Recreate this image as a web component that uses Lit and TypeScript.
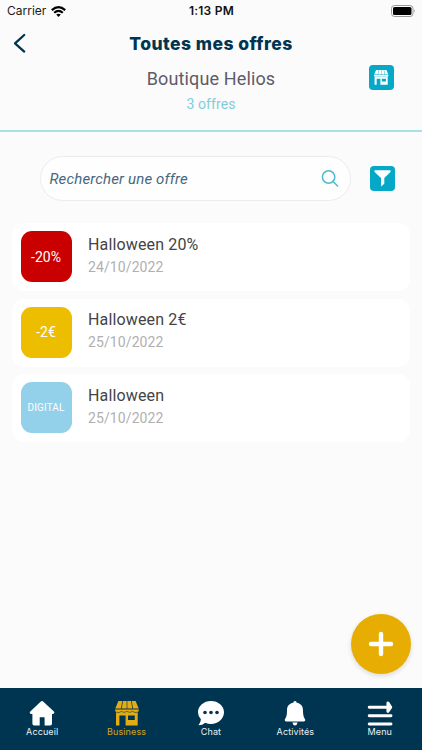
import { LitElement, html, css } from "lit";
import { customElement } from "lit/decorators.js";
import { classMap } from "lit/directives/class-map.js";

const shop = () => html`<svg class="icon" viewBox="0 0 24 24" fill="currentColor">
  <path d="M3.4 0H7.2L6.1 7.6H.3Z M7.9 0H11.7V7.6H6.8Z M12.3 0H16.1L17.2 7.6H12.3Z M16.8 0H20.6L23.7 7.6H17.9Z"/>
  <path d="M0 8.4H24Q23.8 10.6 22.7 11V24.4H10.6V14.4H4.4V24.4H1V11Q.2 10.6 0 8.4Z M13 14.6V19H19.8V14.6Z" fill-rule="evenodd"/>
  <path class="scallop" d="M1.2 11.2Q4.5 12.2 6.4 10.4Q9 12.4 12 10.4Q15 12.4 17.6 10.4Q20 12.2 22.7 11.2"/>
</svg>`;

const tabs = [
  { label: "Accueil", icon: html`<svg class="icon" viewBox="0 0 24 24" fill="currentColor"><path d="M10.6 .7Q12 -.6 13.4 .7L23.9 10.6Q25.2 12.5 23 13H22V22.5Q22 24.4 20.2 24.4H14.6V16.3H9.7V24.4H4.2Q2.4 24.4 2.4 22.5V13H1Q-1.1 12.5 .3 10.6Z"/></svg>` },
  { label: "Business", icon: shop(), active: true },
  { label: "Chat", icon: html`<svg class="icon wide" viewBox="0 0 26 24"><path fill="currentColor" d="M13 0C20.2 0 26 4.9 26 11.2S20.2 22.9 13 22.9Q10 22.9 7.2 21.7Q4.5 24.2 .5 24.2Q2.9 21 2.9 18.2Q0 15.3 0 11.2C0 4.9 5.8 0 13 0Z"/><g fill="#003552"><circle cx="7" cy="11.5" r="1.8"/><circle cx="13" cy="11.5" r="1.8"/><circle cx="19" cy="11.5" r="1.8"/></g></svg>` },
  { label: "Activités", icon: html`<svg class="icon" viewBox="0 0 24 24" fill="currentColor"><path d="M10.3 1.8Q10.3 0 12 0T13.7 1.8C18 2.4 20 5.5 20 9.2C20 15 21 16.5 22.2 18.4Q22.6 20.4 20.8 20.4H3.2Q1.4 20.4 1.8 18.4C3 16.5 4 15 4 9.2C4 5.5 6 2.4 10.3 1.8Z M9.4 21.5H14.6Q14 24.5 12 24.5T9.4 21.5Z"/></svg>` },
  { label: "Menu", icon: html`<svg class="icon" viewBox="0 0 24 24" fill="none" stroke="currentColor" stroke-width="2.9" stroke-linecap="round"><path d="M1.2 6.2H21M1.2 14.8H23M1.2 23H23"/><path fill="currentColor" stroke-linejoin="round" d="M19.9 1.9L22.8 6.2L19.9 10.4Z"/></svg>` },
];

const offers = [
  { badge: "-20%", tone: "red", title: "Halloween 20%", date: "24/10/2022" },
  { badge: "-2€", tone: "yellow", title: "Halloween 2€", date: "25/10/2022" },
  { badge: "DIGITAL", tone: "blue", title: "Halloween", date: "25/10/2022" },
];

@customElement("app-root")
export class AppRoot extends LitElement {
  static styles = css`
    :host { display: flex; flex-direction: column; position: relative; width: 422px; height: 750px; overflow: hidden;
      background: #fbfbfb; font-family: Roboto, sans-serif; }
    * { box-sizing: border-box; }
    svg { display: block; overflow: visible; }
    .status { height: 22px; flex: none; display: grid; grid-template-columns: 1fr auto 1fr; align-items: center;
      padding: 0 6px 0 7px; font: 12px/22px Inter, sans-serif; color: #1b1b1b; }
    .carrier { display: flex; align-items: center; gap: 5px; }
    .clock { font-weight: 600; letter-spacing: .25px; color: #111; }
    .battery { justify-self: end; }
    .head { height: 110px; flex: none; border-bottom: 2px solid #a9e0e5; }
    .titlebar { height: 44px; display: grid; grid-template-columns: 60px 1fr 60px; align-items: center; padding: 0 12px; }
    .title { text-align: center; font: 800 17.5px/24px Inter, sans-serif; letter-spacing: .45px; color: #003552; white-space: nowrap; }
    .shop { height: 26px; display: grid; grid-template-columns: 1fr auto 1fr; align-items: center; padding: 0 28px; }
    .name { grid-column: 2; font-size: 18px; letter-spacing: .14px; line-height: 26px; color: #5d5b69; }
    .square { width: 25px; height: 25px; border-radius: 4px; background: #05a9c7; color: #fff; display: grid; place-items: center; }
    .shop .square { justify-self: end; --size: 14.5px; --gap: #05a9c7; margin-top: -3px; }
    .count { text-align: center; font-size: 14px; letter-spacing: .08px; line-height: 24px; color: #82cbdc; }
    .tools { display: flex; align-items: center; gap: 19px; padding: 24px 0 22px 40px; }
    .search { width: 311px; height: 45px; border: 1px solid #ececec; border-radius: 23px; background: #fefefe;
      display: flex; align-items: center; justify-content: space-between; padding: 0 12px 0 8.5px; }
    .hint { font-style: italic; font-size: 15px; letter-spacing: .16px; line-height: 18px; color: #47687f; }
    .list { display: flex; flex-direction: column; gap: 7.5px; padding: 0 12.5px 0 12px; }
    .card { height: 68px; border-radius: 12px; background: #fff; display: flex; align-items: center; gap: 16.5px; padding: 0 8.5px; }
    .badge { width: 51px; height: 51px; margin-top: -.5px; border-radius: 11px; display: grid; place-items: center; color: #fff; font-size: 14px; }
    .red { background: #ca0000; }
    .yellow { background: #edbd00; }
    .blue { background: #93d0e9; font-size: 10px; letter-spacing: .1px; }
    .texts { margin-top: -2px; }
    .offer { font-size: 16px; letter-spacing: .15px; line-height: 22px; color: #444; }
    .date { font-size: 14px; letter-spacing: .1px; line-height: 23px; color: #b0b0b0; }
    .fab { position: absolute; left: 351px; top: 614px; width: 60px; height: 60px; border-radius: 50%; background: #e7ad02;
      display: grid; place-items: center; box-shadow: 0 2px 5px #0002; }
    .tabs { --size: 24px; --gap: #003552; margin-top: auto; height: 62px; flex: none; background: #003552; display: grid; grid-template-columns: repeat(5, 1fr); }
    .tab { display: flex; flex-direction: column; align-items: center; padding-top: 13px; color: #fff; }
    .tab.active { color: #e3ac13; }
    .label { font: 9px/13px Inter, sans-serif; letter-spacing: .12px; margin-top: -.5px; opacity: .93; }
    .icon { width: var(--size); height: var(--size); }
    .icon.wide { width: 26px; }
    .scallop { fill: none; stroke: var(--gap); stroke-width: .6; }
  `;

  render() {
    return html`
      <div class="status">
        <div class="carrier"><span>Carrier</span>
          <svg width="15" height="11" viewBox="0 0 15 11" fill="none" stroke="#000" stroke-width="2.2"><path d="M.8 4.1Q7.5 -1.8 14.2 4.1M3.2 6.8Q7.5 3 11.8 6.8"/><path fill="#000" stroke="none" d="M5.2 8.6Q7.5 6.8 9.8 8.6L7.5 11Z"/></svg>
        </div>
        <span class="clock">1:13 PM</span>
        <svg class="battery" width="25" height="12" viewBox="0 0 25 12"><rect x=".5" y=".5" width="21.5" height="11" rx="3" fill="none" stroke="#999"/><rect x="2" y="2" width="18.5" height="8" rx="1.6"/><path d="M23.3 4Q24.8 6 23.3 8Z" fill="#999"/></svg>
      </div>
      <header class="head">
        <div class="titlebar">
          <svg width="14" height="20" viewBox="0 0 14 20" fill="none" stroke="#003552" stroke-width="2.3" stroke-linecap="round" stroke-linejoin="round"><path d="M12.2 1L3 9.3L12.2 17.6"/></svg>
          <div class="title">Toutes mes offres</div>
        </div>
        <div class="shop"><span class="name">Boutique Helios</span><span class="square">${shop()}</span></div>
        <div class="count">3 offres</div>
      </header>
      <div class="tools">
        <div class="search"><span class="hint">Rechercher une offre</span>
          <svg width="17" height="17" viewBox="0 0 17 17" fill="none" stroke="#4bbccf" stroke-width="1.5" stroke-linecap="round"><circle cx="7.6" cy="7" r="6.2"/><path d="M12.1 11.5L16.6 16"/></svg>
        </div>
        <span class="square"><svg width="17" height="17" viewBox="0 0 17 17" fill="#fff"><path d="M.8 .3H16.2Q17 1.1 16.4 1.9L10.3 8.1V13.8L7 16.6V8.1L.6 1.9Q0 1.1 .8 .3Z"/></svg></span>
      </div>
      <div class="list">
        ${offers.map((o) => html`<div class="card">
          <div class=${"badge " + o.tone}>${o.badge}</div>
          <div class="texts"><div class="offer">${o.title}</div><div class="date">${o.date}</div></div>
        </div>`)}
      </div>
      <div class="fab"><svg width="24" height="24" viewBox="0 0 24 24" stroke="#fff" stroke-width="4.4" stroke-linecap="round"><path d="M12 2V22M2 12H22"/></svg></div>
      <nav class="tabs">
        ${tabs.map((t) => html`<div class=${classMap({ tab: true, active: !!t.active })}>${t.icon}<span class="label">${t.label}</span></div>`)}
      </nav>`;
  }
}
